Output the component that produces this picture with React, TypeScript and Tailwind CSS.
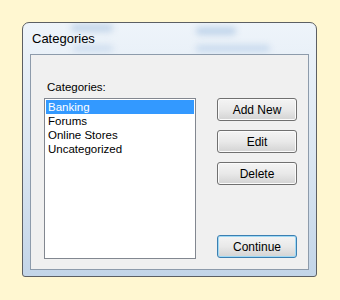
import React from "react";

const items = ["Banking", "Forums", "Online Stores", "Uncategorized"];

const Btn = ({ label, primary = false }: { label: string; primary?: boolean }) => (
  <button
    className={
      "w-[80px] h-[23px] rounded-[3px] border text-[12px] leading-none text-black bg-gradient-to-b from-[#f4f4f4] via-[#e9e9e9] to-[#d3d3d3] " +
      (primary
        ? "border-[#3c7fb1] shadow-[inset_0_0_0_1px_#9fd9f5]"
        : "border-[#707070] shadow-[inset_0_0_0_1px_#fbfbfb]")
    }
  >
    {label}
  </button>
);

export default function App() {
  return (
    <div
      className="w-[340px] h-[300px] bg-[#fff7d1] pt-[22px] pl-[22px]"
      style={{ fontFamily: '"Liberation Sans", Arial, sans-serif' }}
    >
      <div className="relative w-[295px] h-[255px] border border-[#5c5f63] rounded-t-[7px] rounded-b-[3px] bg-gradient-to-b from-[#eef4fa] via-[#dce7f2] to-[#c3d5e8] px-[7px] pb-[6px] flex flex-col overflow-hidden">
        {/* blurred glass reflections */}
        <div className="absolute left-[48px] top-[1px] w-[42px] h-[8px] rounded-full bg-[#c4d6ea] blur-[3px]" />
        <div className="absolute left-[50px] top-[22px] w-[40px] h-[7px] rounded-full bg-[#cfdeef] blur-[3px]" />
        <div className="absolute left-[173px] top-[4px] w-[40px] h-[8px] rounded-full bg-[#c0d4ea] blur-[3px]" />
        <div className="absolute left-[173px] top-[22px] w-[74px] h-[7px] rounded-full bg-[#c8daee] blur-[3px]" />

        <div className="relative h-[31px] pt-[8px] pl-[2px] text-[13px] leading-[15px] text-black">Categories</div>

        <div className="relative flex-1 border border-[#8d9bab] bg-[#f0f0f0] pt-[26px] pl-[13px]">
          <div className="pl-[3px] text-[11.5px] leading-[13px] text-black">Categories:</div>
          <div className="mt-[4px] flex gap-[21px]">
            <div className="w-[152px] h-[161px] border border-[#828790] bg-white p-px">
              {items.map((it, i) => (
                <div
                  key={it}
                  className={
                    "h-[14px] pl-[2px] text-[11.5px] leading-[14px] whitespace-nowrap " +
                    (i === 0 ? "bg-[#3399ff] text-white" : "text-black")
                  }
                >
                  {it}
                </div>
              ))}
            </div>
            <div className="h-[161px] flex flex-col gap-[9px] pb-[1px]">
              <Btn label="Add New" />
              <Btn label="Edit" />
              <Btn label="Delete" />
              <div className="mt-auto">
                <Btn label="Continue" primary />
              </div>
            </div>
          </div>
        </div>
      </div>
    </div>
  );
}
